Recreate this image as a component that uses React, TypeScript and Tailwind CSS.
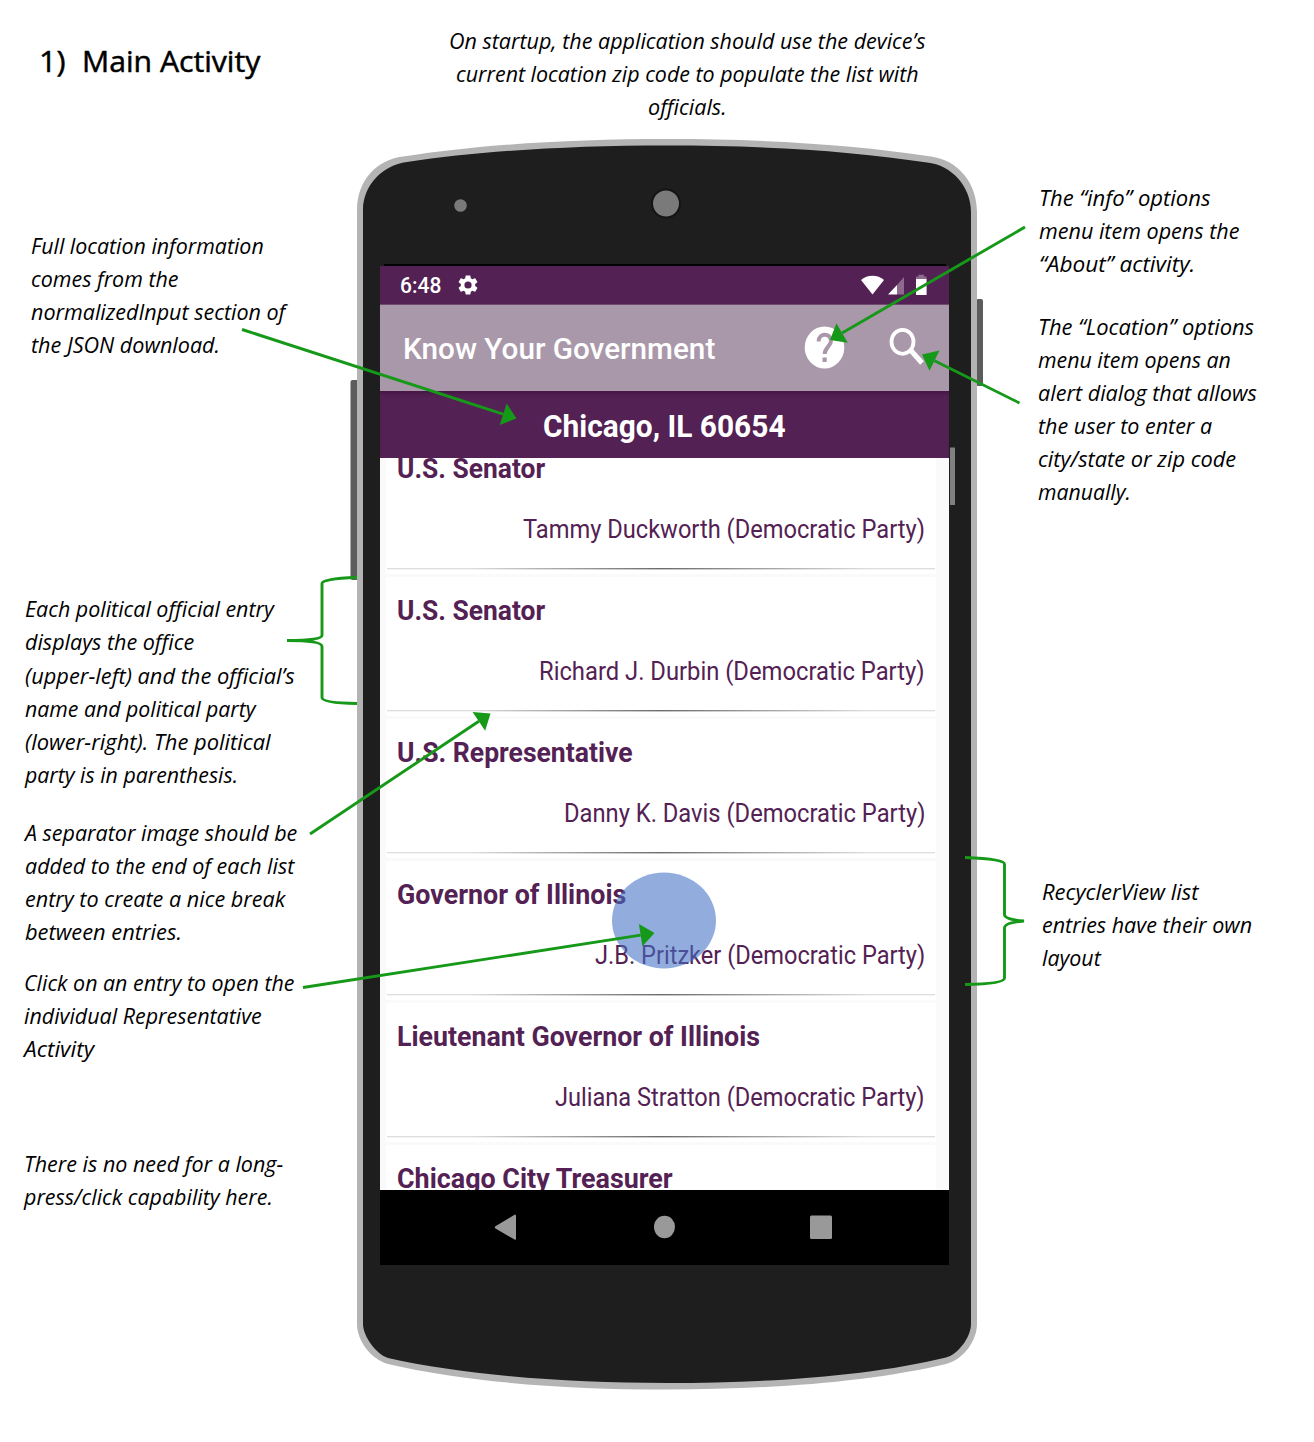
import { useLayoutEffect, useRef, useState } from "react";

/** A single line of text, condensed or widened to occupy exactly `width` pixels. */
function Fit({ text, width }: { text: string; width: number }) {
  const ref = useRef<HTMLSpanElement>(null);
  const [scale, setScale] = useState(1);
  useLayoutEffect(() => {
    if (ref.current) setScale(width / ref.current.offsetWidth);
  }, [text, width]);
  return (
    <div className="whitespace-pre" style={{ width }}>
      <span ref={ref} className="inline-block origin-left" style={{ transform: `scaleX(${scale})` }}>
        {text}
      </span>
    </div>
  );
}

type Line = [string, number];

function Note({ lines, className }: { lines: Line[]; className: string }) {
  return (
    <div
      className={`flex flex-col font-['Open_Sans'] text-[21px] leading-[33.1px] text-black italic [font-variant-ligatures:none] ${className}`}
    >
      {lines.map(([text, width]) => (
        <Fit key={text} text={text} width={width} />
      ))}
    </div>
  );
}

const officials: { office: Line; name?: Line }[] = [
  { office: ["U.S. Senator", 148], name: ["Tammy Duckworth (Democratic Party)", 402] },
  { office: ["U.S. Senator", 148], name: ["Richard J. Durbin (Democratic Party)", 386] },
  { office: ["U.S. Representative", 236], name: ["Danny K. Davis (Democratic Party)", 361.5] },
  { office: ["Governor of Illinois", 229], name: ["J.B. Pritzker (Democratic Party)", 330.5] },
  { office: ["Lieutenant Governor of Illinois", 363], name: ["Juliana Stratton (Democratic Party)", 370] },
  { office: ["Chicago City Treasurer", 275.5] },
];

function PhoneBody() {
  return (
    <svg className="absolute -top-[9px] -left-[12px]" width="645" height="1270" viewBox="345 130 645 1270">
      <rect x="350.5" y="380" width="8" height="200" rx="2" fill="#5c5c5c" />
      <rect x="976" y="299" width="7" height="87" rx="2" fill="#5c5c5c" />
      <path
        d="M357 210C357 181 376 160 403 156.500C480 144.500 570 139 667 139S854 144.500 931 156.500C958 160 977 183 977 212V1324C977 1341 963 1360 946 1364C870 1382 770 1389.500 667 1389.500S464 1382 388 1364C371 1359 357 1341 357 1324Z"
        fill="#b4b4b4"
      />
      <path
        d="M363 210C363 186 382 165 407 162C480 151 570 145.500 667 145.500S854 151 927 162.500C952 165 971 187 971 212V1324C971 1338 957 1355 946 1357.500C870 1376 770 1383 667 1383S464 1375 388 1358C376 1354 363 1336 363 1324Z"
        fill="#1e1e1e"
      />
      <circle cx="460.500" cy="205.500" r="6.300" fill="#7a7a7a" />
      <circle cx="666" cy="203.500" r="14" fill="#7a7a7a" stroke="#141414" strokeWidth="2" />
      <rect x="384" y="264" width="562" height="2" fill="#000" />
      <rect x="950" y="447.500" width="5" height="57.500" fill="#808080" />
    </svg>
  );
}

function StatusBar() {
  return (
    <div className="flex h-[38px] items-center bg-[#532153] pl-[20px] font-medium text-white">
      <div className="mt-0.5 text-[21.5px] leading-7">
        <Fit text="6:48" width={41} />
      </div>
      <svg className="ml-[15px]" width="24" height="24" viewBox="0 0 24 24" fill="#fff">
        <path d="M19.140 12.940c.04-.3.060-.61.060-.94 0-.32-.02-.64-.07-.94l2.030-1.580a.49.49 0 0 0 .12-.61l-1.920-3.320a.488.488 0 0 0-.59-.22l-2.390.96c-.5-.38-1.030-.7-1.620-.94l-.36-2.540a.484.484 0 0 0-.48-.41h-3.840c-.24 0-.43.17-.47.41l-.36 2.540c-.59.24-1.130.57-1.620.94l-2.390-.96c-.22-.08-.47 0-.59.22L2.740 8.870c-.12.21-.08.47.12.61l2.030 1.580c-.05.3-.09.63-.09.94s.02.64.07.94l-2.030 1.580a.49.49 0 0 0-.12.61l1.920 3.320c.12.22.37.29.59.22l2.390-.96c.5.38 1.030.7 1.620.94l.36 2.540c.05.24.24.41.48.41h3.840c.24 0 .44-.17.47-.41l.36-2.540c.59-.24 1.130-.56 1.620-.94l2.390.96c.22.08.47 0 .59-.22l1.920-3.320c.12-.22.07-.47-.12-.61l-2.010-1.580zM12 15.600A3.600 3.600 0 1 1 12 8.400a3.600 3.600 0 0 1 0 7.200z" />
      </svg>
      <svg className="ml-[380px]" width="70" height="24" viewBox="860 273 70 24" fill="#fff">
        <path d="M861 280C867 274.300 878 274.300 884 280L872.500 294.500Z" />
        <path d="M888 294.500 897 285V294.500Z" />
        <path d="M897 285 904 277V294.500H897Z" fill="#8f6a8f" />
        <path d="M916 279V276.500H918.500V274.800H924V276.500H926.600V279Z" fill="#8f6a8f" />
        <rect x="916" y="279" width="10.600" height="16" />
      </svg>
    </div>
  );
}

function AppBar() {
  return (
    <div className="flex h-[87px] items-center border-t border-[#714a72] bg-[#a998a9] pl-[23px] font-medium text-white">
      <div className="mt-0.5 text-[29.500px] leading-9">
        <Fit text="Know Your Government" width={312} />
      </div>
      <svg className="ml-[87px]" width="126" height="48" viewBox="802 324 126 48">
        <ellipse cx="824.500" cy="347.500" rx="19.800" ry="21" fill="#fff" />
        <path
          d="M818.600 341.500C818.600 332.500 831 332.500 831 341C831 346 824.700 347.500 824.700 354"
          fill="none"
          stroke="#a998a9"
          strokeWidth="4"
        />
        <rect x="822.500" y="357.500" width="4.200" height="4.500" fill="#a998a9" />
        <ellipse cx="902.500" cy="341.800" rx="11" ry="12" fill="none" stroke="#fff" strokeWidth="3.800" />
        <path d="M910.500 350 922 363" stroke="#fff" strokeWidth="5" />
      </svg>
    </div>
  );
}

function OfficialEntry({ office, name }: { office: Line; name?: Line }) {
  return (
    <div className="mb-[3px] flex h-[139px] shrink-0 flex-col bg-white pt-[18px] pl-[11px]">
      <div className="text-[28px] leading-8 font-bold">
        <Fit text={office[0]} width={office[1]} />
      </div>
      {name && (
        <>
          <div className="mt-[29px] flex justify-end pr-[11px] text-[25px] leading-8">
            <Fit text={name[0]} width={name[1]} />
          </div>
          <div className="mt-[22px] -ml-2.5 flex w-[548px] flex-col">
            <div className="h-px bg-linear-to-r from-[#dedede] from-15% via-[#6c6c6c] via-50% to-[#dedede] to-88%" />
            <div className="h-px bg-linear-to-r from-[#f4f4f4] from-15% via-[#c4c4c4] via-50% to-[#f4f4f4] to-88%" />
          </div>
        </>
      )}
    </div>
  );
}

function Screen() {
  return (
    <div className="relative mt-[127px] ml-[23px] flex h-[999px] w-[569px] flex-col font-[Roboto] text-[#532153]">
      <StatusBar />
      <AppBar />
      <div className="flex h-[67px] items-center justify-center bg-[#532153] text-[30.500px] leading-9 font-bold text-white shadow-[inset_0_5px_4px_-3px_#421642]">
        <div className="mt-1">
          <Fit text="Chicago, IL 60654" width={243} />
        </div>
      </div>
      <div className="h-[732px] overflow-hidden bg-[#fafafa] pr-[13px] pl-[6px]">
        <div className="-mt-[23px] flex flex-col">
          {officials.map((o, i) => (
            <OfficialEntry key={i} office={o.office} name={o.name} />
          ))}
        </div>
      </div>
      <div className="flex h-[75px] items-center bg-black pl-[114px]">
        <svg width="340" height="28" viewBox="494 1214 340 28" fill="#999">
          <path d="M495 1226.500 515 1214.500Q516 1214.500 516 1216V1238.500Q516 1240.500 514.500 1239.500L495.500 1228.500Q494.500 1227.500 495 1226.500Z" />
          <ellipse cx="664.500" cy="1227" rx="10.500" ry="11.200" />
          <rect x="810" y="1215.500" width="22" height="23.500" rx="1.500" />
        </svg>
      </div>
    </div>
  );
}

function Arrow({ x1, y1, x2, y2 }: { x1: number; y1: number; x2: number; y2: number }) {
  const len = Math.hypot(x2 - x1, y2 - y1);
  const ux = (x2 - x1) / len;
  const uy = (y2 - y1) / len;
  const bx = x2 - ux * 14;
  const by = y2 - uy * 14;
  return (
    <>
      <line x1={x1} y1={y1} x2={bx} y2={by} stroke="#169818" strokeWidth="2.9" />
      <polygon
        points={`${x2},${y2} ${bx - uy * 11.3},${by + ux * 11.3} ${bx + uy * 11.3},${by - ux * 11.3}`}
        fill="#169818"
      />
    </>
  );
}

function Annotations() {
  return (
    <svg className="pointer-events-none absolute inset-0" width="1314" height="1442" viewBox="0 0 1314 1442">
      <ellipse cx="664" cy="920.500" rx="52" ry="48" fill="#4472c4" fillOpacity="0.58" />
      <Arrow x1={242} y1={329.500} x2={516.500} y2={418.500} />
      <Arrow x1={1025} y1={227} x2={830} y2={340} />
      <Arrow x1={1019.500} y1={403} x2={922} y2={354.500} />
      <Arrow x1={310} y1={834} x2={490.500} y2={713.500} />
      <Arrow x1={303} y1={987.500} x2={654.500} y2={933} />
      <g fill="none" stroke="#169818" strokeWidth="2.900">
        <path d="M357 577.500Q322 578.500 322 583.500V635.500Q322 640.500 287 640.500Q322 640.500 322 646.500V697.500Q322 703 357 703.500" />
        <path d="M965 857.500Q1004.500 859 1004.500 864V914.500Q1004.500 919.500 1024 921Q1004.500 922.500 1004.500 928V978Q1004.500 984 965 984.500" />
      </g>
    </svg>
  );
}

export default function App() {
  return (
    <main className="relative flex h-[1442px] w-[1314px] overflow-hidden bg-white">
      <section className="flex w-[357px] shrink-0 flex-col">
        <h1 className="mt-[41px] ml-[39px] flex gap-[16px] font-['Open_Sans'] text-[29.500px] leading-10 text-black [-webkit-text-stroke:0.5px_black]">
          <Fit text="1)" width={27} />
          <Fit text="Main Activity" width={178} />
        </h1>
        <Note
          className="mt-[149px] ml-[31px]"
          lines={[
            ["Full location information", 233],
            ["comes from the", 148],
            ["normalizedInput section of", 254],
            ["the JSON download.", 189],
          ]}
        />
        <Note
          className="mt-[231px] ml-[25px]"
          lines={[
            ["Each political official entry", 249],
            ["displays the office", 169],
            ["(upper-left) and the official’s", 270],
            ["name and political party", 231],
            ["(lower-right). The political", 246],
            ["party is in parenthesis.", 213],
          ]}
        />
        <Note
          className="mt-[25px] ml-[25px]"
          lines={[
            ["A separator image should be", 272],
            ["added to the end of each list", 269],
            ["entry to create a nice break", 260],
            ["between entries.", 157],
          ]}
        />
        <Note
          className="mt-[17.500px] ml-[24px]"
          lines={[
            ["Click on an entry to open the", 271],
            ["individual Representative", 238],
            ["Activity", 70],
          ]}
        />
        <Note
          className="mt-[81.500px] ml-[24px]"
          lines={[
            ["There is no need for a long-", 259],
            ["press/click capability here.", 249],
          ]}
        />
      </section>

      <section className="flex w-[620px] shrink-0 flex-col">
        <Note
          className="mt-[25px] ml-[40px] h-[99px] items-center"
          lines={[
            ["On startup, the application should use the device’s", 476],
            ["current location zip code to populate the list with", 463],
            ["officials.", 79],
          ]}
        />
        <div className="relative mt-[15px] h-[1251px]">
          <PhoneBody />
          <Screen />
        </div>
      </section>

      <section className="flex flex-col">
        <Note
          className="mt-[182px] ml-[62px]"
          lines={[
            ["The “info” options", 171],
            ["menu item opens the", 200],
            ["“About” activity.", 156],
          ]}
        />
        <Note
          className="mt-[29.500px] ml-[61px]"
          lines={[
            ["The “Location” options", 216],
            ["menu item opens an", 193],
            ["alert dialog that allows", 219],
            ["the user to enter a", 174],
            ["city/state or zip code", 198],
            ["manually.", 93],
          ]}
        />
        <Note
          className="mt-[366.500px] ml-[65px]"
          lines={[
            ["RecyclerView list", 157],
            ["entries have their own", 210],
            ["layout", 59],
          ]}
        />
      </section>

      <Annotations />
    </main>
  );
}
